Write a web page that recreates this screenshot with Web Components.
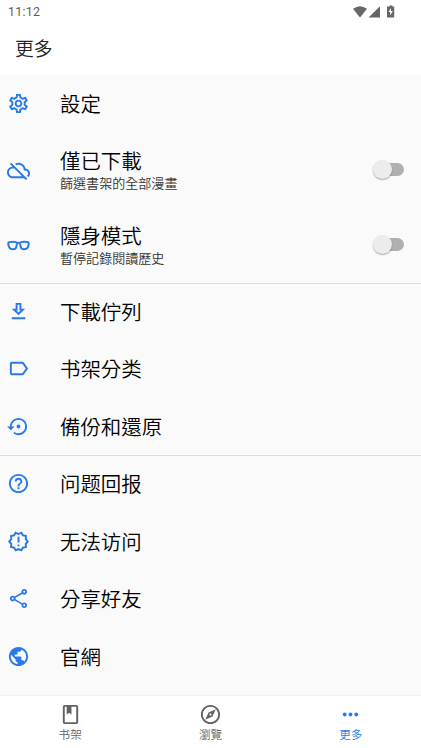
<!DOCTYPE html>
<html lang="zh-Hant"><head><meta charset="utf-8"><title>更多</title>
<style>html,body{margin:0;height:100%}body{background:#fafafa;font-family:Roboto,"Noto Sans CJK SC",sans-serif}</style></head>
<body><more-page></more-page>
<script>
const ICONS={
gear:'<path d="M19.43 12.98c.04-.32.07-.64.07-.98 0-.34-.03-.66-.07-.98l2.11-1.65c.19-.15.24-.42.12-.64l-2-3.46c-.09-.16-.26-.25-.44-.25-.06 0-.12.01-.17.03l-2.49 1c-.52-.4-1.08-.73-1.69-.98l-.38-2.65C14.46 2.18 14.25 2 14 2h-4c-.25 0-.46.18-.49.42l-.38 2.65c-.61.25-1.17.59-1.69.98l-2.49-1c-.06-.02-.12-.03-.18-.03-.17 0-.34.09-.43.25l-2 3.46c-.13.22-.07.49.12.64l2.11 1.65c-.04.32-.07.65-.07.98 0 .33.03.66.07.98l-2.11 1.65c-.19.15-.24.42-.12.64l2 3.46c.09.16.26.25.44.25.06 0 .12-.01.17-.03l2.49-1c.52.4 1.08.73 1.69.98l.38 2.65c.03.24.24.42.49.42h4c.25 0 .46-.18.49-.42l.38-2.65c.61-.25 1.17-.59 1.69-.98l2.49 1c.06.02.12.03.18.03.17 0 .34-.09.43-.25l2-3.46c.12-.22.07-.49-.12-.64l-2.11-1.65zm-1.98-1.71c.04.31.05.52.05.73 0 .21-.02.43-.05.73l-.14 1.13.89.7 1.08.84-.7 1.21-1.27-.51-1.04-.42-.9.68c-.43.32-.84.56-1.25.73l-1.06.43-.16 1.13-.2 1.35h-1.4l-.19-1.35-.16-1.13-1.06-.43c-.43-.18-.83-.41-1.23-.71l-.91-.7-1.06.43-1.27.51-.7-1.21 1.08-.84.89-.7-.14-1.13c-.03-.31-.05-.54-.05-.74s.02-.43.05-.73l.14-1.13-.89-.7-1.08-.84.7-1.21 1.27.51 1.04.42.9-.68c.43-.32.84-.56 1.25-.73l1.06-.43.16-1.13.2-1.35h1.39l.19 1.35.16 1.13 1.06.43c.43.18.83.41 1.23.71l.91.7 1.06-.43 1.27-.51.7 1.21-1.07.85-.89.7.14 1.13zM12 8c-2.21 0-4 1.79-4 4s1.79 4 4 4 4-1.79 4-4-1.79-4-4-4zm0 6c-1.1 0-2-.9-2-2s.9-2 2-2 2 .9 2 2-.9 2-2 2z"/>',
cloud:'<path d="M24 15c0-2.64-2.05-4.78-4.65-4.96C18.67 6.59 15.64 4 12 4c-1.33 0-2.57.36-3.65.97l1.49 1.49C10.51 6.17 11.23 6 12 6c3.04 0 5.5 2.46 5.5 5.5v.5H19c1.66 0 3 1.34 3 3 0 .99-.48 1.85-1.21 2.4l1.41 1.41c1.09-.92 1.8-2.27 1.8-3.81zM4.41 3.86L3 5.27l2.77 2.77h-.42C2.34 8.36 0 10.91 0 14c0 3.31 2.69 6 6 6h11.73l2 2 1.41-1.41L4.41 3.86zM6 18c-2.21 0-4-1.79-4-4s1.79-4 4-4h1.73l8 8H6z"/>',
glasses:'<path fill="none" stroke="currentColor" stroke-width="2.1" d="M2.2 8.5Q6 7.5 9.4 8.5Q10.5 8.9 10.3 10.4L9.8 13.2Q9.3 16 6.2 16Q3 16 2.2 13.6Q1.3 11 1.3 9.8Q1.3 8.9 2.2 8.5ZM21.8 8.5Q18 7.5 14.6 8.5Q13.5 8.9 13.7 10.4L14.2 13.2Q14.7 16 17.8 16Q21 16 21.8 13.6Q22.7 11 22.7 9.8Q22.7 8.9 21.8 8.5ZM10 9.7Q12 8.6 14 9.7"/>',
download:'<path d="M13 5v6h1.17L12 13.17 9.83 11H11V5h2m2-2H9v6H5l7 7 7-7h-4V3zm4 15H5v2h14v-2z"/>',
label:'<path d="M17.63 5.84C17.27 5.33 16.67 5 16 5L5 5.01C3.9 5.01 3 5.9 3 7v10c0 1.1.9 1.99 2 1.99L16 19c.67 0 1.27-.33 1.63-.84L22 12l-4.37-6.16zM16 17H5V7h11l3.55 5L16 17z"/>',
restore:'<path d="M14 12c0-1.1-.9-2-2-2s-2 .9-2 2 .9 2 2 2 2-.9 2-2zm-2-9c-4.97 0-9 4.03-9 9H0l4 4 4-4H5c0-3.87 3.13-7 7-7s7 3.13 7 7-3.13 7-7 7c-1.51 0-2.91-.49-4.06-1.3l-1.42 1.44C8.04 20.3 9.94 21 12 21c4.97 0 9-4.03 9-9s-4.03-9-9-9z"/>',
help:'<path d="M11 18h2v-2h-2v2zm1-16C6.48 2 2 6.48 2 12s4.48 10 10 10 10-4.48 10-10S17.52 2 12 2zm0 18c-4.41 0-8-3.59-8-8s3.59-8 8-8 8 3.59 8 8-3.59 8-8 8zm0-14c-2.21 0-4 1.79-4 4h2c0-1.1.9-2 2-2s2 .9 2 2c0 2-3 1.75-3 5h2c0-2.25 3-2.5 3-5 0-2.21-1.79-4-4-4z"/>',
alert:'<path d="M23 12l-2.44-2.78.34-3.68-3.61-.82-1.89-3.18L12 3 8.6 1.54 6.71 4.72l-3.61.81.34 3.68L1 12l2.44 2.78-.34 3.69 3.61.82 1.89 3.18L12 21l3.4 1.46 1.89-3.18 3.61-.82-.34-3.68L23 12zm-4.51 2.11l.26 2.79-2.74.62-1.43 2.41L12 18.82l-2.58 1.11-1.43-2.41-2.74-.62.26-2.8L3.66 12l1.85-2.12-.26-2.78 2.74-.61 1.43-2.41L12 5.18l2.58-1.11 1.43 2.41 2.74.62-.26 2.79L20.34 12l-1.85 2.11zM11 15h2v2h-2zm0-8h2v6h-2z"/>',
share:'<path d="M18 16.08c-.76 0-1.44.3-1.96.77L8.91 12.7c.05-.23.09-.46.09-.7s-.04-.47-.09-.7l7.05-4.11c.54.5 1.25.81 2.04.81 1.66 0 3-1.34 3-3s-1.34-3-3-3-3 1.34-3 3c0 .24.04.47.09.7L8.04 9.81C7.5 9.31 6.79 9 6 9c-1.66 0-3 1.34-3 3s1.34 3 3 3c.79 0 1.5-.31 2.04-.81l7.12 4.16c-.05.21-.08.43-.08.65 0 1.61 1.31 2.92 2.92 2.92s2.92-1.31 2.92-2.92-1.31-2.92-2.92-2.92zM18 4c.55 0 1 .45 1 1s-.45 1-1 1-1-.45-1-1 .45-1 1-1zM6 13c-.55 0-1-.45-1-1s.45-1 1-1 1 .45 1 1-.45 1-1 1zm12 7.02c-.55 0-1-.45-1-1s.45-1 1-1 1 .45 1 1-.45 1-1 1z"/>',
globe:'<path d="M12 2C6.48 2 2 6.48 2 12s4.48 10 10 10 10-4.48 10-10S17.52 2 12 2zm-1 17.93c-3.95-.49-7-3.85-7-7.93 0-.62.08-1.21.21-1.79L9 15v1c0 1.1.9 2 2 2v1.93zm6.9-2.54c-.26-.81-1-1.39-1.9-1.39h-1v-3c0-.55-.45-1-1-1H8v-2h2c.55 0 1-.45 1-1V7h2c1.1 0 2-.9 2-2v-.41c2.93 1.19 5 4.06 5 7.41 0 2.08-.8 3.97-2.1 5.39z"/>',
book:'<path fill-rule="evenodd" d="M6 2h12c1.1 0 2 .9 2 2v16c0 1.1-.9 2-2 2H6c-1.1 0-2-.9-2-2V4c0-1.1.9-2 2-2zm0 2v16h12V4h-5v8l-2.5-1.8L8 12V4z"/>',
compass:'<path d="M12 2C6.48 2 2 6.48 2 12s4.48 10 10 10 10-4.48 10-10S17.52 2 12 2zm0 18c-4.41 0-8-3.59-8-8s3.59-8 8-8 8 3.59 8 8-3.59 8-8 8zm-5.5-2.5l7.51-3.49L17.5 6.5 9.99 9.99 6.5 17.5zm5.5-6.6c.61 0 1.1.49 1.1 1.1s-.49 1.1-1.1 1.1-1.1-.49-1.1-1.1.49-1.1 1.1-1.1z"/>',
dots:'<path d="M6 10c-1.1 0-2 .9-2 2s.9 2 2 2 2-.9 2-2-.9-2-2-2zm12 0c-1.1 0-2 .9-2 2s.9 2 2 2 2-.9 2-2-.9-2-2-2zm-6 0c-1.1 0-2 .9-2 2s.9 2 2 2 2-.9 2-2-.9-2-2-2z"/>'};
function define(name,render){
  customElements.define(name,class extends HTMLElement{
    connectedCallback(){
      if(this.shadowRoot)return;
      const t=document.createElement('template');
      t.innerHTML=render(this);
      this.attachShadow({mode:'open'}).append(t.content.cloneNode(true));
    }});
}
define('app-icon',e=>`<style>:host{display:block;width:23px;height:23px;flex:none}svg{display:block;width:100%;height:100%;fill:currentColor}</style><svg viewBox="0 0 24 24">${ICONS[e.getAttribute('name')]}</svg>`);
define('status-bar',()=>`<style>:host{display:flex;height:24px;box-sizing:border-box;padding:0 25px 0 8px;align-items:center;justify-content:space-between;color:#5c5c5c;font:400 12.4px/24px Roboto,sans-serif;letter-spacing:.3px}svg{display:block;fill:#666;margin-top:-1px}</style><span>11:12</span><svg width="43" height="14" viewBox="0 0 43 14"><path d="M0 3.8Q7 -1.2 14 3.8L7 12.5ZM15.5 12.5L27 1.2V12.5ZM35.2 1.6h1.3V.5h2.8v1.1h1.9V12.5H34V1.6Z"/><path fill="#fff" d="M38 3L35.5 7h1.7v3.5l2.6-4.5h-1.8Z"/></svg>`);
define('toggle-switch',()=>`<style>:host{display:block;position:relative;width:31px;height:20px;flex:none}i{position:absolute;left:6px;right:0;top:3px;height:13px;border-radius:7px;background:#b0b0b0}b{position:absolute;left:0;top:0;width:19px;height:19px;border-radius:50%;background:#ececec;box-shadow:0 1px 1.5px #0005}</style><i></i><b></b>`);
define('menu-row',e=>`<style>:host{display:flex;box-sizing:border-box;height:57.5px;align-items:center;padding:0 17px 0 7px;color:#000}:host([switch]){height:75px}app-icon{color:#2979ea}.text{flex:1;margin-left:30px;padding-top:3px}.title{display:block;font-size:20.45px;font-weight:350;line-height:24px;white-space:nowrap}.sub{display:block;font-size:13.05px;font-weight:350;line-height:18px;margin-top:1px;color:#333;white-space:nowrap}</style><app-icon name="${e.getAttribute('icon')}"></app-icon><div class="text"><span class="title"><slot></slot></span>${e.hasAttribute('switch')?'<span class="sub"><slot name="sub"></slot></span>':''}</div>${e.hasAttribute('switch')?'<toggle-switch></toggle-switch>':''}`);
define('menu-group',()=>`<style>:host{display:block}:host([line]){border-bottom:1px solid #dcdcdc;margin-bottom:-1px}</style><slot></slot>`);
define('nav-tab',e=>`<style>:host{display:flex;flex:1;flex-direction:column;align-items:center;padding-top:7px;color:#626262;font-size:11.6px;font-weight:350;line-height:16px}:host([active]){color:#2979ea}app-icon{margin-bottom:1px}</style><app-icon name="${e.getAttribute('icon')}"></app-icon><span><slot></slot></span>`);
define('nav-bar',()=>`<style>:host{display:flex;height:52px;background:#fff;border-top:1px solid #f1f1f1;flex:none}</style><slot></slot>`);
define('more-page',()=>`<style>:host{display:flex;flex-direction:column;height:748px;background:#fafafa;overflow:hidden}header{height:75px;flex:none;background:#fff}h1{margin:0;padding-left:15px;font-size:18.8px;font-weight:350;line-height:52px;color:#222}main{flex:1;min-height:0;overflow:hidden}</style>
<header><status-bar></status-bar><h1>更多</h1></header>
<main><menu-group line><menu-row icon="gear">設定</menu-row><menu-row icon="cloud" switch>僅已下載<span slot="sub">篩選書架的全部漫畫</span></menu-row><menu-row icon="glasses" switch>隱身模式<span slot="sub">暫停記錄閱讀歷史</span></menu-row></menu-group>
<menu-group line><menu-row icon="download">下載佇列</menu-row><menu-row icon="label">书架分类</menu-row><menu-row icon="restore">備份和還原</menu-row></menu-group>
<menu-group><menu-row icon="help">问题回报</menu-row><menu-row icon="alert">无法访问</menu-row><menu-row icon="share">分享好友</menu-row><menu-row icon="globe">官網</menu-row></menu-group></main>
<nav-bar><nav-tab icon="book">书架</nav-tab><nav-tab icon="compass">瀏覽</nav-tab><nav-tab icon="dots" active>更多</nav-tab></nav-bar>`);
</script></body></html>
